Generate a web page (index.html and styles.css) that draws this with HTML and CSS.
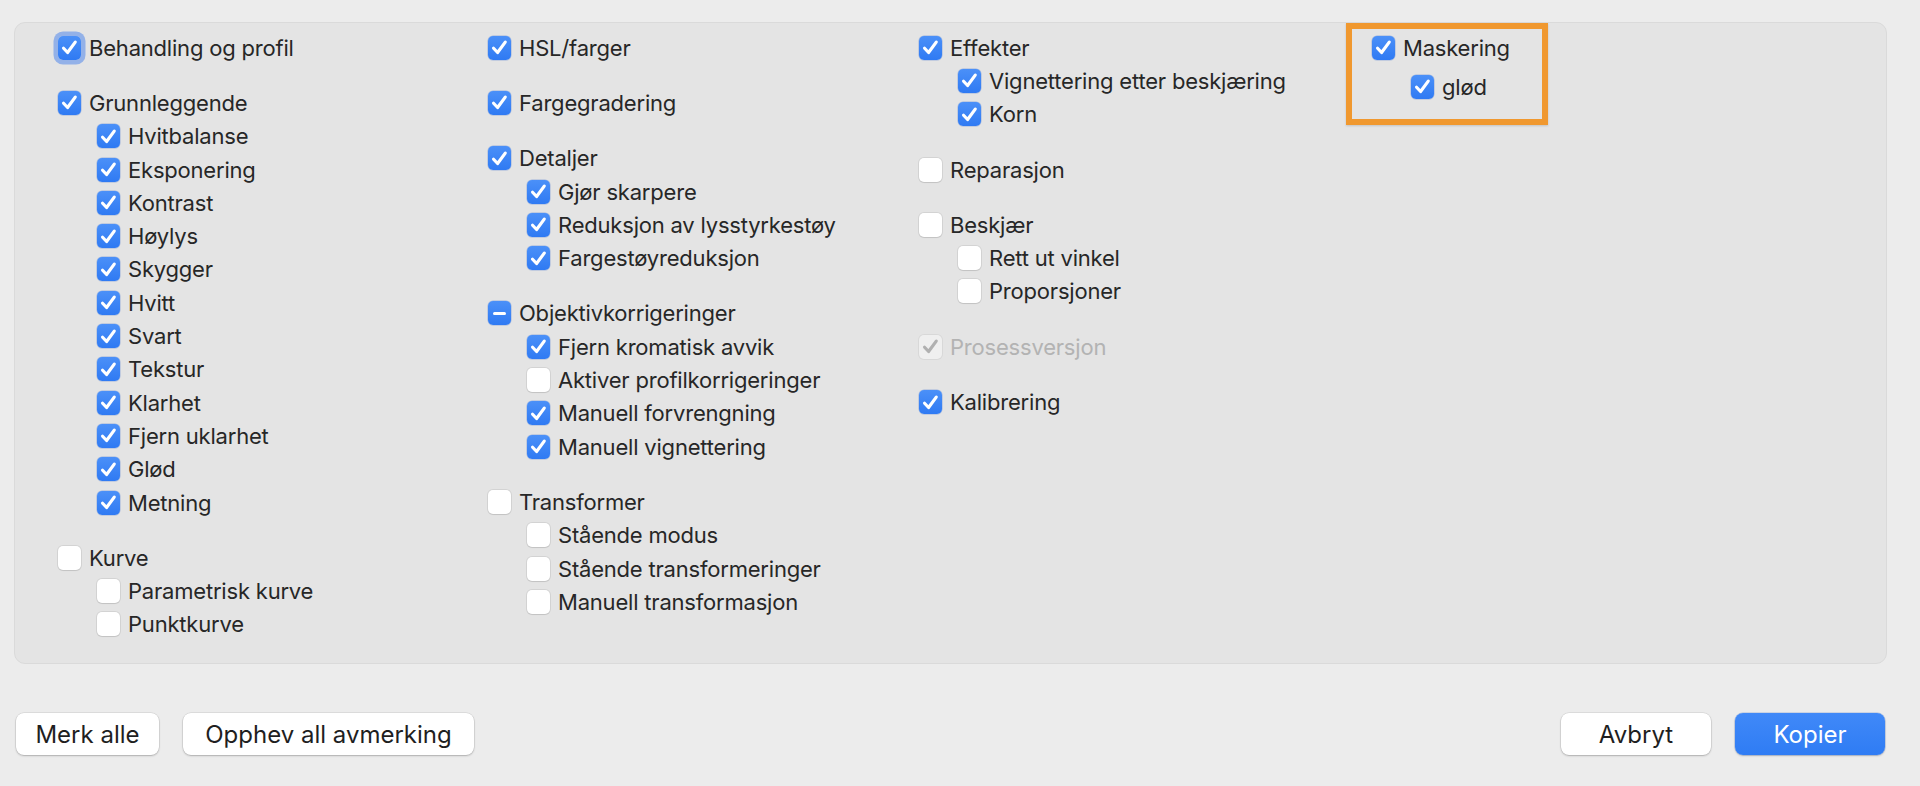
FILE: index.html
```html
<!DOCTYPE html>
<html lang="no">
<head>
<meta charset="utf-8">
<title>Kopier innstillinger</title>
<link rel="stylesheet" href="styles.css">
</head>
<body>
<svg width="0" height="0" class="defs">
  <defs>
    <symbol id="chk" viewBox="0 0 24 24"><path d="M5.8 12.8 L10 17.2 L18 6.4" fill="none" stroke-width="3.3" stroke-linecap="round" stroke-linejoin="round"/></symbol>
  </defs>
</svg>
<main class="dialog">
  <section class="panel">
    <div class="col">
      <div class="group">
        <div class="row"><span class="cb on focus"><svg><use href="#chk"/></svg></span><span class="lbl">Behandling og profil</span></div>
      </div>
      <div class="group">
        <div class="row"><span class="cb on"><svg><use href="#chk"/></svg></span><span class="lbl">Grunnleggende</span></div>
        <div class="row sub"><span class="cb on"><svg><use href="#chk"/></svg></span><span class="lbl">Hvitbalanse</span></div>
        <div class="row sub"><span class="cb on"><svg><use href="#chk"/></svg></span><span class="lbl">Eksponering</span></div>
        <div class="row sub"><span class="cb on"><svg><use href="#chk"/></svg></span><span class="lbl">Kontrast</span></div>
        <div class="row sub"><span class="cb on"><svg><use href="#chk"/></svg></span><span class="lbl">Høylys</span></div>
        <div class="row sub"><span class="cb on"><svg><use href="#chk"/></svg></span><span class="lbl">Skygger</span></div>
        <div class="row sub"><span class="cb on"><svg><use href="#chk"/></svg></span><span class="lbl">Hvitt</span></div>
        <div class="row sub"><span class="cb on"><svg><use href="#chk"/></svg></span><span class="lbl">Svart</span></div>
        <div class="row sub"><span class="cb on"><svg><use href="#chk"/></svg></span><span class="lbl">Tekstur</span></div>
        <div class="row sub"><span class="cb on"><svg><use href="#chk"/></svg></span><span class="lbl">Klarhet</span></div>
        <div class="row sub"><span class="cb on"><svg><use href="#chk"/></svg></span><span class="lbl">Fjern uklarhet</span></div>
        <div class="row sub"><span class="cb on"><svg><use href="#chk"/></svg></span><span class="lbl">Glød</span></div>
        <div class="row sub"><span class="cb on"><svg><use href="#chk"/></svg></span><span class="lbl">Metning</span></div>
      </div>
      <div class="group">
        <div class="row"><span class="cb"></span><span class="lbl">Kurve</span></div>
        <div class="row sub"><span class="cb"></span><span class="lbl">Parametrisk kurve</span></div>
        <div class="row sub"><span class="cb"></span><span class="lbl">Punktkurve</span></div>
      </div>
    </div>

    <div class="col">
      <div class="group">
        <div class="row"><span class="cb on"><svg><use href="#chk"/></svg></span><span class="lbl">HSL/farger</span></div>
      </div>
      <div class="group">
        <div class="row"><span class="cb on"><svg><use href="#chk"/></svg></span><span class="lbl">Fargegradering</span></div>
      </div>
      <div class="group">
        <div class="row"><span class="cb on"><svg><use href="#chk"/></svg></span><span class="lbl">Detaljer</span></div>
        <div class="row sub"><span class="cb on"><svg><use href="#chk"/></svg></span><span class="lbl">Gjør skarpere</span></div>
        <div class="row sub"><span class="cb on"><svg><use href="#chk"/></svg></span><span class="lbl">Reduksjon av lysstyrkestøy</span></div>
        <div class="row sub"><span class="cb on"><svg><use href="#chk"/></svg></span><span class="lbl">Fargestøyreduksjon</span></div>
      </div>
      <div class="group">
        <div class="row"><span class="cb on"><span class="dash"></span></span><span class="lbl">Objektivkorrigeringer</span></div>
        <div class="row sub"><span class="cb on"><svg><use href="#chk"/></svg></span><span class="lbl">Fjern kromatisk avvik</span></div>
        <div class="row sub"><span class="cb"></span><span class="lbl">Aktiver profilkorrigeringer</span></div>
        <div class="row sub"><span class="cb on"><svg><use href="#chk"/></svg></span><span class="lbl">Manuell forvrengning</span></div>
        <div class="row sub"><span class="cb on"><svg><use href="#chk"/></svg></span><span class="lbl">Manuell vignettering</span></div>
      </div>
      <div class="group">
        <div class="row"><span class="cb"></span><span class="lbl">Transformer</span></div>
        <div class="row sub"><span class="cb"></span><span class="lbl">Stående modus</span></div>
        <div class="row sub"><span class="cb"></span><span class="lbl">Stående transformeringer</span></div>
        <div class="row sub"><span class="cb"></span><span class="lbl">Manuell transformasjon</span></div>
      </div>
    </div>

    <div class="col">
      <div class="group">
        <div class="row"><span class="cb on"><svg><use href="#chk"/></svg></span><span class="lbl">Effekter</span></div>
        <div class="row sub"><span class="cb on"><svg><use href="#chk"/></svg></span><span class="lbl">Vignettering etter beskjæring</span></div>
        <div class="row sub"><span class="cb on"><svg><use href="#chk"/></svg></span><span class="lbl">Korn</span></div>
      </div>
      <div class="group">
        <div class="row"><span class="cb"></span><span class="lbl">Reparasjon</span></div>
      </div>
      <div class="group">
        <div class="row"><span class="cb"></span><span class="lbl">Beskjær</span></div>
        <div class="row sub"><span class="cb"></span><span class="lbl">Rett ut vinkel</span></div>
        <div class="row sub"><span class="cb"></span><span class="lbl">Proporsjoner</span></div>
      </div>
      <div class="group">
        <div class="row disabled"><span class="cb dis"><svg><use href="#chk"/></svg></span><span class="lbl">Prosessversjon</span></div>
      </div>
      <div class="group">
        <div class="row"><span class="cb on"><svg><use href="#chk"/></svg></span><span class="lbl">Kalibrering</span></div>
      </div>
    </div>

    <div class="col col-mask">
      <div class="group">
        <div class="row"><span class="cb on"><svg><use href="#chk"/></svg></span><span class="lbl">Maskering</span></div>
        <div class="row sub sub-mask"><span class="cb on"><svg><use href="#chk"/></svg></span><span class="lbl">glød</span></div>
      </div>
    </div>

    <div class="highlight"></div>
  </section>

  <footer class="actions">
    <div class="btns">
      <button class="btn w-merk">Merk alle</button>
      <button class="btn w-opphev">Opphev all avmerking</button>
    </div>
    <div class="btns">
      <button class="btn w-std">Avbryt</button>
      <button class="btn w-std primary">Kopier</button>
    </div>
  </footer>
</main>
</body>
</html>
```

FILE: styles.css
```css
* { box-sizing: border-box; }

html, body {
  margin: 0;
  padding: 0;
  background: #ececec;
  width: 1920px;
  height: 786px;
  overflow: hidden;
}

body {
  font-family: Inter, "Noto Sans", "Liberation Sans", sans-serif;
  color: #272727;
}

.defs { position: absolute; }

.dialog {
  padding: 22px 33px 0 14px;
}

.panel {
  position: relative;
  display: grid;
  grid-template-columns: 430px 431px 453px 1fr;
  padding: 8px 0 22px 43px;
  background: #e4e4e4;
  border: 1px solid #dadada;
  border-radius: 11px;
}

.col {
  display: flex;
  flex-direction: column;
  gap: 22px;
}

.row {
  display: flex;
  align-items: center;
  height: 33.3px;
  gap: 8px;
  font-size: 22px;
  letter-spacing: -0.2px;
  white-space: nowrap;
}

.row.sub { padding-left: 39px; }

.cb {
  position: relative;
  flex: none;
  width: 23px;
  height: 24px;
  border-radius: 5px;
  background: #ffffff;
  box-shadow: 0 0 0 1px rgba(0,0,0,0.07), 0 1px 1px rgba(0,0,0,0.08);
  display: flex;
  align-items: center;
  justify-content: center;
}

.cb svg {
  width: 23px;
  height: 23px;
  stroke: #ffffff;
}

.cb.on {
  background: linear-gradient(#4b90f8, #2f7af3);
  box-shadow: 0 0 0 0.5px rgba(30,90,200,0.35);
}

.cb.focus {
  box-shadow: 0 0 0 4.5px rgba(80,135,235,0.55);
}

.cb .dash {
  width: 13px;
  height: 3.5px;
  border-radius: 2px;
  background: #ffffff;
}

.cb.dis {
  background: #efefef;
  box-shadow: 0 0 0 1px rgba(0,0,0,0.05);
}

.cb.dis svg { stroke: #b0b0b0; }

.row.disabled .lbl { color: #b3b3b3; }

.col-mask .sub-mask { margin-top: 6px; }

.highlight {
  position: absolute;
  left: 1331px;
  top: 0;
  width: 202px;
  height: 102px;
  border: 6px solid #f0982f;
  box-shadow: 0 1px 2px rgba(0,0,0,0.15);
  pointer-events: none;
}

.actions {
  display: flex;
  justify-content: space-between;
  margin-top: 49px;
  padding-left: 2px;
  padding-right: 2px;
}

.btns {
  display: flex;
  gap: 24px;
}

.btn {
  height: 42px;
  border: none;
  border-radius: 8px;
  background: #ffffff;
  box-shadow: 0 0 0 0.5px rgba(0,0,0,0.12), 0 1px 2px rgba(0,0,0,0.22);
  font-family: Inter, "Noto Sans", "Liberation Sans", sans-serif;
  font-size: 24px;
  color: #1f1f1f;
  padding: 0;
}

.w-merk { width: 143px; }
.w-opphev { width: 291px; }
.w-std { width: 150px; }

.btn.primary {
  background: linear-gradient(#4089f8, #2f7cf4);
  color: #ffffff;
  box-shadow: 0 0 0 0.5px rgba(20,80,190,0.3), 0 1px 2px rgba(0,0,0,0.2);
}
```
